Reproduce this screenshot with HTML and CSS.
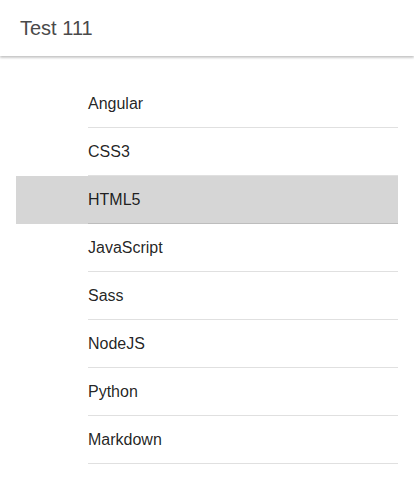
FILE: index.html
```html
<!DOCTYPE html>
<html>
<head>
<meta charset="utf-8">
<link rel="stylesheet" href="styles.css">
</head>
<body>
<header class="toolbar"><span class="title">Test 111</span></header>
<main class="content">
  <ul class="list">
    <li class="item"><span class="label">Angular</span></li>
    <li class="item"><span class="label">CSS3</span></li>
    <li class="item active"><span class="label">HTML5</span></li>
    <li class="item"><span class="label">JavaScript</span></li>
    <li class="item"><span class="label">Sass</span></li>
    <li class="item"><span class="label">NodeJS</span></li>
    <li class="item"><span class="label">Python</span></li>
    <li class="item"><span class="label">Markdown</span></li>
  </ul>
</main>
</body>
</html>
```
FILE: styles.css
```css
html, body {
  margin: 0;
  padding: 0;
  background: #fff;
  font-family: "Liberation Sans", Arial, sans-serif;
}
.toolbar {
  height: 56px;
  display: flex;
  align-items: center;
  padding: 0 20px;
  background: #fff;
  box-shadow: 0 1px 3px rgba(0,0,0,0.2), 0 2px 2px rgba(0,0,0,0.1);
  position: relative;
}
.title {
  font-size: 20px;
  color: #4a4a4a;
}
.content {
  padding: 24px 16px 0;
}
.list {
  list-style: none;
  margin: 0;
  padding: 0;
}
.item {
  height: 48px;
  padding-left: 72px;
  display: flex;
}
.label {
  flex: 1;
  display: flex;
  align-items: center;
  font-size: 16px;
  color: rgba(0,0,0,0.87);
  border-bottom: 1px solid #e0e0e0;
  box-sizing: border-box;
}
.item.active {
  background: #d6d6d6;
}
.item.active .label {
  border-bottom-color: #bdbdbd;
}
```
